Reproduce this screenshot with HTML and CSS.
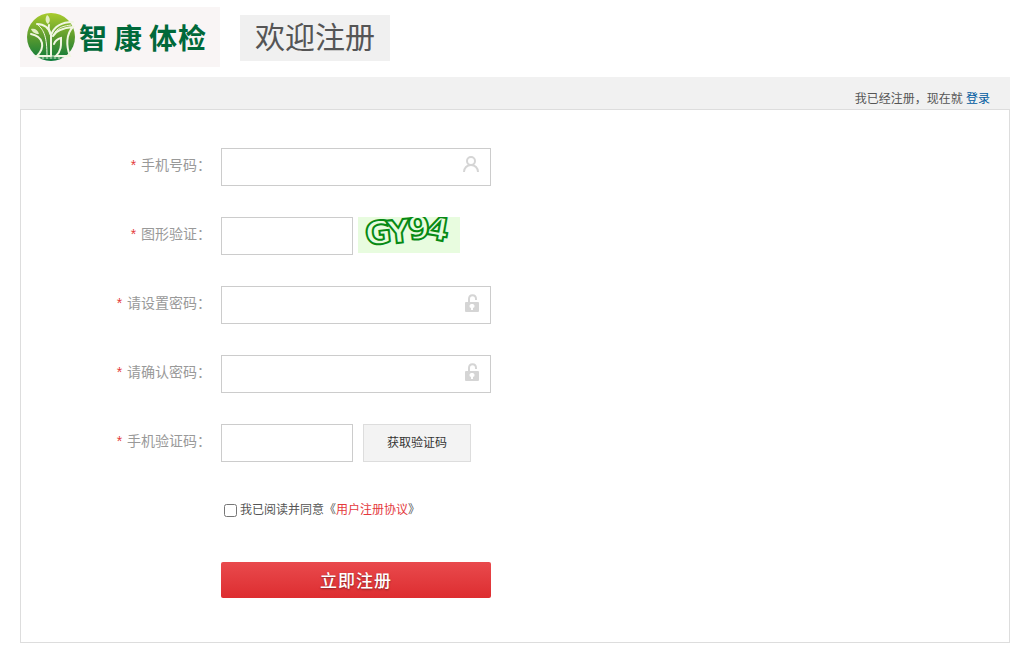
FILE: index.html
```html
<!DOCTYPE html>
<html lang="zh-CN">
<head>
    <meta charset="UTF-8">
    <meta name="viewport" content="width=device-width, initial-scale=1.0">
    <title>智康体检</title>
    <link rel="stylesheet" href="styles.css">
</head>
<body>
    <header class="header">
        <a href="#" class="logo" aria-label="智康体检">
            <svg width="200" height="60" viewBox="0 0 200 60">
                <defs>
                    <linearGradient id="leaf" x1="0" y1="0" x2="0" y2="1">
                        <stop offset="0" stop-color="#a9cb2d"/>
                        <stop offset="0.5" stop-color="#5c9b2e"/>
                        <stop offset="1" stop-color="#0b7a3b"/>
                    </linearGradient>
                </defs>
                <circle cx="31" cy="30" r="24" fill="url(#leaf)"/>
                <g fill="#e3efc4">
                    <path d="M28 17c-3-2-3-6-1-9 3 2 4 6 1 9z"/>
                    <path d="M11 22c4-1 7 1 8 5-4 0-7-2-8-5z"/>
                </g>
                <g fill="none" stroke="#f1f6e2" stroke-linecap="round">
                    <path d="M17 17c7 0 12 4 14 11 3-8 10-13 22-13" stroke-width="2"/>
                    <path d="M29 18c-1 3 0 6 2 10v21" stroke-width="2"/>
                    <path d="M11 27c5 1 10 4 11 9 1 5-2 10-5 13h13" stroke-width="2"/>
                    <path d="M18 18c6 5 9 12 9 31" stroke-width="1"/>
                    <path d="M33 29c3-6 10-8 20-9-7 7-7 19-3 29H36c6-6 5-12 5-18-4 1-6 3-7 6" stroke-width="2"/>
                    <path d="M51 18c-7 1-12 2-16 7" stroke-width="1"/>
                    <path d="M14 49h35" stroke-width="1"/>
                    <path d="M18 51h27" stroke-width="1" stroke-dasharray="2 2"/>
                </g>
                <text class="logo-text" y="42" x="59 94 129 158">智康体检</text>
            </svg>
        </a>
        <h1 class="title">欢迎注册</h1>
    </header>

    <main class="register">
        <div class="login-bar">我已经注册，现在就 <a href="#">登录</a></div>

        <form class="form">
            <div class="row">
                <label for="phone"><span class="star">*</span> 手机号码：</label>
                <div class="field">
                    <input type="text" id="phone" class="text">
                    <svg class="icon" width="18" height="18" viewBox="0 0 18 18" fill="none" stroke="#d5d5d5" stroke-width="2">
                        <circle cx="9" cy="6" r="4"/>
                        <path d="M2 17c0-4 3-7 7-7s7 3 7 7"/>
                    </svg>
                </div>
            </div>
            <div class="row">
                <label for="captcha"><span class="star">*</span> 图形验证：</label>
                <div class="field">
                    <input type="text" id="captcha" class="text short">
                    <svg class="captcha" width="102" height="36" viewBox="0 0 102 36">
                        <text x="7" y="27" transform="rotate(-6 19 16)">G</text>
                        <text x="29" y="26" transform="rotate(-6 40 14)">Y</text>
                        <text x="50" y="22" transform="rotate(-8 60 12)">9</text>
                        <text x="69" y="23" transform="rotate(10 80 12)">4</text>
                    </svg>
                </div>
            </div>
            <div class="row">
                <label for="password"><span class="star">*</span> 请设置密码：</label>
                <div class="field">
                    <input type="password" id="password" class="text">
                    <svg class="icon" width="18" height="20" viewBox="0 0 18 20">
                        <path d="M7 11V6c0-5 7-5 7 0v1" fill="none" stroke="#d5d5d5" stroke-width="2"/>
                        <path fill="#d5d5d5" fill-rule="evenodd" d="M4 9h12q1 0 1 1v8q0 1-1 1H4q-1 0-1-1v-8q0-1 1-1zm6 2a2 2 0 0 0-1 4v2h2v-2a2 2 0 0 0-1-4z"/>
                    </svg>
                </div>
            </div>
            <div class="row">
                <label for="confirm"><span class="star">*</span> 请确认密码：</label>
                <div class="field">
                    <input type="password" id="confirm" class="text">
                    <svg class="icon" width="18" height="20" viewBox="0 0 18 20">
                        <path d="M7 11V6c0-5 7-5 7 0v1" fill="none" stroke="#d5d5d5" stroke-width="2"/>
                        <path fill="#d5d5d5" fill-rule="evenodd" d="M4 9h12q1 0 1 1v8q0 1-1 1H4q-1 0-1-1v-8q0-1 1-1zm6 2a2 2 0 0 0-1 4v2h2v-2a2 2 0 0 0-1-4z"/>
                    </svg>
                </div>
            </div>
            <div class="row">
                <label for="code"><span class="star">*</span> 手机验证码：</label>
                <div class="field">
                    <input type="text" id="code" class="text short">
                    <button type="button" class="send">获取验证码</button>
                </div>
            </div>
            <div class="agree">
                <input type="checkbox" id="agree">
                <label for="agree">我已阅读并同意</label><span class="agreement">《<a href="#">用户注册协议</a>》</span>
            </div>
            <button type="submit" class="submit">立即注册</button>
        </form>
    </main>
</body>
</html>
```

FILE: styles.css
```css
* {
    box-sizing: border-box;
}

body {
    margin: 0;
    padding: 7px 16px 7px 20px;
    background: #fff;
    color: #555;
    font: 12px/18px "Liberation Sans", "Noto Sans CJK SC", sans-serif;
}

a {
    text-decoration: none;
}

.header {
    display: flex;
    align-items: flex-start;
    gap: 20px;
    margin-bottom: 10px;
}

.logo {
    display: block;
    height: 60px;
    background: #f9f5f5;
}

.logo-text {
    font: bold 28px "Noto Sans CJK SC", sans-serif;
    fill: #00693a;
}

.title {
    margin: 8px 0 0;
    padding: 0 15px;
    background: #f0f0f0;
    font-size: 30px;
    font-weight: 400;
    line-height: 46px;
}

/* login bar */
.login-bar {
    padding: 13px 20px 1px;
    background: #f1f1f1;
    text-align: right;
}

.login-bar a {
    color: #005aa0;
}

/* form */
.form {
    padding: 38px 0 44px;
    border: 1px solid #ddd;
}

.row {
    display: flex;
    gap: 10px;
    margin-bottom: 31px;
}

.row label {
    width: 190px;
    color: #999;
    font-size: 14px;
    line-height: 34px;
    text-align: right;
}

.star {
    margin-right: 1px;
    color: #e4393c;
    font-size: 14px;
}

.field {
    position: relative;
    display: flex;
}

.text {
    width: 270px;
    height: 38px;
    padding: 0 36px 0 10px;
    border: 1px solid #ccc;
    background: #fff;
    font-size: 14px;
    outline: none;
}

.short {
    width: 132px;
    padding: 0 10px;
}

.icon {
    position: absolute;
    top: 7px;
    right: 11px;
}

.captcha {
    margin-left: 5px;
    background: #e8fcdf;
    overflow: hidden;
}

.captcha text {
    font: bold 32px "DejaVu Sans", sans-serif;
    fill: #e8fcdf;
    stroke: #078a14;
    stroke-width: 2px;
}

.send {
    width: 108px;
    height: 38px;
    margin-left: 10px;
    padding: 0;
    border: 1px solid #ddd;
    background: #f3f3f3;
    color: #333;
    font: inherit;
    cursor: pointer;
}

.agree {
    display: flex;
    align-items: center;
    margin: 39px 0 42px 200px;
    line-height: 19px;
}

.agree input {
    width: 13px;
    height: 13px;
    margin: 0 3px;
}

.agree a {
    color: #e4393c;
}

.submit {
    display: block;
    width: 270px;
    height: 36px;
    margin-left: 200px;
    padding: 0 0 2px;
    border: 0;
    border-radius: 2px;
    background: linear-gradient(#e94a4d, #dd2d30);
    color: #fff;
    font: 500 17px "Noto Sans CJK SC", sans-serif;
    letter-spacing: 1px;
    text-shadow: 0 1px 2px rgba(0, 0, 0, 0.4);
    cursor: pointer;
}
```
